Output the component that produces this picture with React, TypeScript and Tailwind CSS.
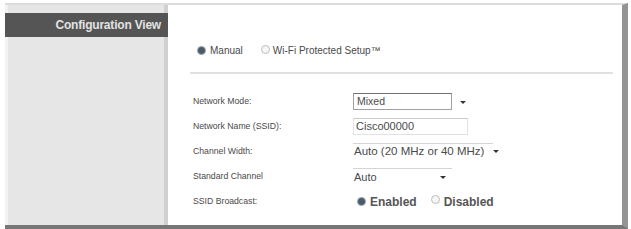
import React from "react";

function Radio({ on }: { on: boolean }) {
  return on ? (
    <span className="inline-block w-[9px] h-[9px] rounded-full bg-[#4a5a66] border border-[#9aa8b2]" />
  ) : (
    <span className="inline-block w-[9px] h-[9px] rounded-full bg-[#f6f6f6] border border-[#bcbcbc]" />
  );
}

function Arrow() {
  return <span className="inline-block w-0 h-0 border-l-[3px] border-r-[3px] border-t-[3px] border-l-transparent border-r-transparent border-t-[#333]" />;
}

export default function App() {
  const font = { fontFamily: '"Liberation Sans", Arial, sans-serif' };
  return (
    <div className="w-[631px] h-[229px] bg-white pl-[5px] pt-[3px]" style={font}>
      <div className="w-[623px] h-[226px] flex border-t-[2px] border-t-[#dcdcdc] border-b-[4px] border-b-[#767676] border-r-[6px] border-r-[#949494]">
        {/* left panel */}
        <div className="w-[163px] h-full bg-[#e6e6e6] border-l-[3px] border-l-[#f2f2f2] border-r-[4px] border-r-[#d0d0d0] relative">
          <div className="absolute left-[-3px] top-[8px] w-[163px] h-[24px] bg-[#555555] flex items-center justify-end pr-[7px]">
            <span className="text-[12px] font-bold text-[#e2e2e2] tracking-[-0.2px]">Configuration View</span>
          </div>
        </div>
        {/* content */}
        <div className="flex-1 h-full bg-white pl-[25px] pr-[9px] pt-[39px] text-[#4a4a4a]">
          <div className="flex items-center h-[12px] pl-[4px] text-[10px]">
            <Radio on />
            <span className="ml-[4px]">Manual</span>
            <span className="ml-[18px]"><Radio on={false} /></span>
            <span className="ml-[3px]">Wi-Fi Protected Setup™</span>
          </div>
          <div className="mt-[16px] ml-[-3px] h-[2px] bg-[#e0e0e0]" />
          <div className="mt-[19px] flex flex-col gap-[8px] text-[8.7px]">
            <div className="flex items-center h-[17px]">
              <span className="w-[160px]">Network Mode:</span>
              <span className="w-[99px] h-[17px] border border-[#a0a0a0] border-t-[#707070] flex items-center pl-[3px] text-[10.5px]">Mixed</span>
              <span className="ml-[8px]"><Arrow /></span>
            </div>
            <div className="flex items-center h-[17px]">
              <span className="w-[160px]">Network Name (SSID):</span>
              <span className="w-[115px] h-[17px] border border-[#e2e2e2] border-t-[#cacaca] flex items-center pl-[2px] text-[11px]">Cisco00000</span>
            </div>
            <div className="flex items-center h-[17px]">
              <span className="w-[160px]">Channel Width:</span>
              <span className="h-[17px] border-t border-t-[#d4d4d4] flex items-center pl-[1px] pr-[9px] text-[11.5px]">Auto (20 MHz or 40 MHz)</span>
              <Arrow />
            </div>
            <div className="flex items-center h-[17px]">
              <span className="w-[160px]">Standard Channel</span>
              <span className="w-[99px] h-[17px] border-t border-t-[#d4d4d4] flex items-center justify-between pl-[1px] pr-[6px] text-[11px]">
                <span>Auto</span>
                <Arrow />
              </span>
            </div>
            <div className="flex items-center h-[17px]">
              <span className="w-[164px]">SSID Broadcast:</span>
              <Radio on />
              <span className="ml-[4px] font-bold text-[12px] text-[#555]">Enabled</span>
              <span className="ml-[14px]"><Radio on={false} /></span>
              <span className="ml-[4px] font-bold text-[12px] text-[#555]">Disabled</span>
            </div>
          </div>
        </div>
      </div>
    </div>
  );
}
